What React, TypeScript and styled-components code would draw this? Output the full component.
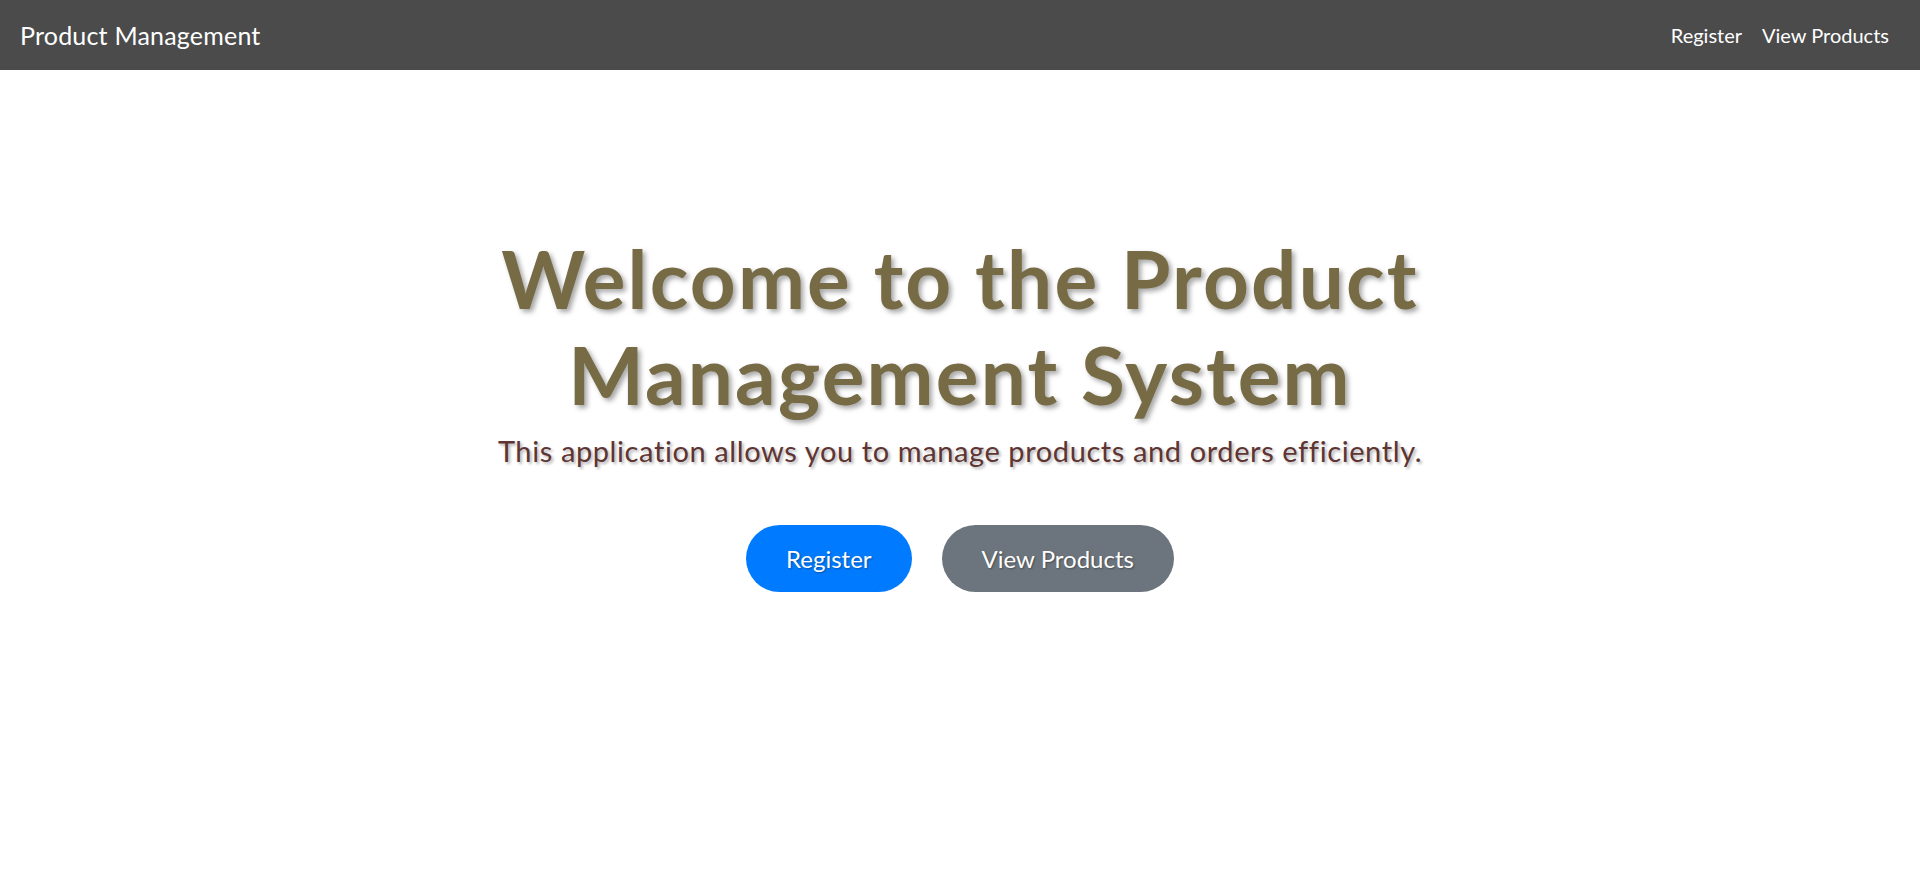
import styled, { createGlobalStyle } from 'styled-components'

const GlobalStyle = createGlobalStyle`
  * {
    box-sizing: border-box;
  }
  body {
    margin: 0;
    background: #ffffff;
    font-family: Lato, "Open Sans", sans-serif;
  }
`

export const Navbar = styled.nav`
  height: 70px;
  background: #4b4b4b;
  display: flex;
  align-items: center;
  justify-content: space-between;
  padding: 0 31px 0 20px;
`

export const Brand = styled.a`
  color: #ffffff;
  font-size: 25px;
  letter-spacing: 0.2px;
  text-decoration: none;
`

export const NavLinks = styled.div`
  display: flex;
  align-items: center;
  gap: 20px;
`

export const NavLink = styled.a`
  color: #ffffff;
  font-size: 20px;
  text-decoration: none;
`

export const Hero = styled.main`
  display: flex;
  flex-direction: column;
  align-items: center;
  padding-top: 160px;
  text-align: center;
`

export const Title = styled.h1`
  margin: 0;
  max-width: 1100px;
  font-size: 80px;
  font-weight: 700;
  letter-spacing: 2.2px;
  line-height: 1.2;
  color: #766b45;
  text-shadow: 3px 3px 5px rgba(0, 0, 0, 0.35);
`

export const Subtitle = styled.p`
  margin: 8px 0 53px;
  font-size: 29px;
  letter-spacing: 0.6px;
  line-height: 1.45;
  color: #5e3533;
  text-shadow: 2px 2px 3px rgba(0, 0, 0, 0.3);
`

export const Actions = styled.div`
  display: flex;
  gap: 30px;
`

export const Button = styled.button<{ $variant: 'primary' | 'secondary' }>`
  border: none;
  border-radius: 34px;
  height: 67px;
  padding: 0 40px;
  font-family: inherit;
  font-size: 24px;
  color: #ffffff;
  cursor: pointer;
  background: ${props => (props.$variant === 'primary' ? '#007bff' : '#6c757d')};
  text-shadow: 1px 1px 2px rgba(0, 0, 0, 0.35);
`

export default function App() {
  return (
    <>
      <GlobalStyle />
      <Navbar>
        <Brand href="#">Product Management</Brand>
        <NavLinks>
          <NavLink href="#">Register</NavLink>
          <NavLink href="#">View Products</NavLink>
        </NavLinks>
      </Navbar>

      <Hero>
        <Title>Welcome to the Product Management System</Title>
        <Subtitle>This application allows you to manage products and orders efficiently.</Subtitle>
        <Actions>
          <Button $variant="primary">Register</Button>
          <Button $variant="secondary">View Products</Button>
        </Actions>
      </Hero>
    </>
  )
}
